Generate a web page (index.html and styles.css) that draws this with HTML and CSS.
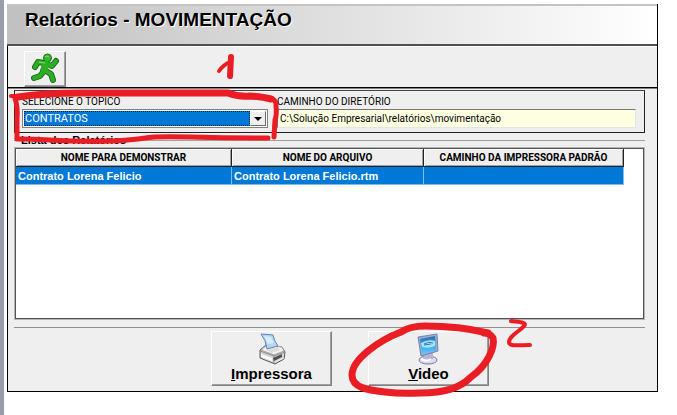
FILE: index.html
```html
<!DOCTYPE html>
<html lang="pt-BR">
<head>
<meta charset="utf-8">
<title>Relatórios - MOVIMENTAÇÃO</title>
<link rel="stylesheet" href="styles.css">
</head>
<body>
<main class="window">
  <header class="titlebar"><h1>Relatórios - MOVIMENTAÇÃO</h1></header>
  <div class="toolbar">
    <button class="exit" type="button" aria-label="Sair">
      <svg width="30" height="30" viewBox="0 0 30 30">
        <g fill="none" stroke="#176c17" stroke-width="6" stroke-linejoin="round" stroke-linecap="round">
          <path d="M17 11L14 18M15 10L9 9L6 14M20 12L23 13L27 8M15 18L11 23L5 25M17 18L22 21L24 27"/>
        </g>
        <circle cx="18.500" cy="5" r="4" fill="#35b92c" stroke="#176c17"/>
        <g fill="none" stroke="#2eae25" stroke-width="4" stroke-linejoin="round" stroke-linecap="round">
          <path d="M15 10L9 9L6 14M20 12L23 13L27 8M15 18L11 23L5 25M17 18L22 21L24 27"/>
          <path d="M17 11L15 17" stroke-width="7"/>
        </g>
        <path d="M16 4Q18 2 20 4M10 9L16 10" fill="none" stroke="#8be07f"/>
      </svg>
    </button>
  </div>
  <div class="content">
    <section class="filters">
      <div class="field topic">
        <label for="topic">SELECIONE O TÓPICO</label>
        <div class="combo">
          <select id="topic"><option>CONTRATOS</option></select>
          <span class="arrow" aria-hidden="true"></span>
        </div>
      </div>
      <div class="field path">
        <label for="path">CAMINHO DO DIRETÓRIO</label>
        <input id="path" type="text" readonly value="C:\Solução Empresarial\relatórios\movimentação">
      </div>
    </section>
    <section class="reports">
      <h2><span>Lista dos Relatórios</span></h2>
      <div class="grid">
        <table>
          <thead>
            <tr><th class="name">NOME PARA DEMONSTRAR</th><th class="file">NOME DO ARQUIVO</th><th>CAMINHO DA IMPRESSORA PADRÃO</th></tr>
          </thead>
          <tbody>
            <tr><td>Contrato Lorena Felicio</td><td>Contrato Lorena Felicio.rtm</td><td></td></tr>
          </tbody>
        </table>
      </div>
    </section>
    <footer class="actions">
      <button type="button">
        <svg width="28" height="32" viewBox="0 0 28 32">
          <path d="M2 17L8 12L24 14L27 19L26 26L17 31L2 25Z" fill="#d6d6d6" stroke="#55585b" stroke-linejoin="round"/>
          <path d="M3 17L9 12L24 14L26 18L16 22Z" fill="#f1f1ef" stroke="#a2a2a2"/>
          <path d="M3 1L15 2Q16 8 20 13L9 16Q8 7 3 1Z" fill="#b4d5fa" stroke="#6382ac"/>
          <path d="M6 3L13 4L16 10L10 11Z" fill="#d9ebff"/>
          <path d="M2 18L16 23L27 19M16 23V30" fill="none" stroke="#8b8b8b"/>
          <path d="M9 17L20 14L22 17L13 20Z" fill="#dcdcda"/>
          <path d="M3 21L14 25V28L3 24Z" fill="#fafafa"/>
          <path d="M15 25L24 21V24L16 28Z" fill="#4c4f52"/>
          <path d="M17 29L26 25" stroke="#eeeeee"/>
        </svg>
        <span><u>I</u>mpressora</span>
      </button>
      <button type="button">
        <svg width="28" height="32" viewBox="0 0 28 32">
          <defs><linearGradient id="screen" x2="0" y2="1"><stop stop-color="#3268ae"/><stop offset=".55" stop-color="#3aa9ed"/><stop offset="1" stop-color="#66c8fb"/></linearGradient></defs>
          <ellipse cx="13" cy="27" rx="9" ry="4" fill="#dedeef" stroke="#76769c"/>
          <path d="M10 20L18 19L18 26Q14 29 8 26Z" fill="#b5b5da"/>
          <path d="M3 4L22 1L23 18L6 23Z" fill="#9aaed4" stroke="#7186ad" stroke-linejoin="round"/>
          <path d="M5 6L20 3L21 17L7 21Z" fill="url(#screen)"/>
          <path d="M6 10Q13 6 20 8V13Q13 16 7 14Z" fill="#a4e3f8"/>
          <path d="M9 11Q14 8 18 10M9 12L16 11" fill="none" stroke="#287da8"/>
          <path d="M6 26Q12 29 16 26" fill="none" stroke="#ffffff" stroke-width="2"/>
        </svg>
        <span><u>V</u>ideo</span>
      </button>
    </footer>
  </div>
</main>
<svg class="marks" viewBox="0 0 677 415" preserveAspectRatio="none" aria-hidden="true">
  <path d="M219 71Q223 65 230 62" stroke-width="4"/>
  <path d="M231 57L230 76" stroke-width="6"/>
  <path d="M11 96L22 96" stroke-width="4"/>
  <path d="M18 97Q45 93 80 93L228 93Q238 97 250 96Q263 97 271 99" stroke-width="7"/>
  <path d="M268 98Q277 99 276 106Q277 115 275 120L274 137" stroke-width="5"/>
  <path d="M15 98Q18 108 17 118L17 138" stroke-width="5"/>
  <path d="M17 139Q35 139 50 140Q80 142 112 141Q132 140 145 138Q155 136 190 137Q230 138 268 138" stroke-width="5"/>
  <path d="M488 333Q460 326 425 326Q410 326 401 332C380 340 352 359 352 375C352 388 368 390 385 392Q400 394 420 393C445 393 460 388 471 377C488 365 495 347 493 338Q490 333 484 333" stroke-width="7"/>
  <path d="M511 321C518 322 528 322 524 326C520 331 509 336 509 342C509 347 520 345 530 345" stroke-width="4"/>
</svg>
</body>
</html>
```

FILE: styles.css
```css
* { box-sizing: border-box; }

body {
  position: relative;
  display: flex;
  min-height: 100vh;
  margin: 0;
  padding: 4px 19px 23px 3px;
  border-left: 4px solid #989ca8;
  background: #fff;
  color: #000;
  font-family: Roboto, "Liberation Sans", sans-serif;
  font-size: 10px;
}

.window {
  flex: 1;
  display: flex;
  flex-direction: column;
  min-width: 0;
  border: 1px solid #000;
  border-top: 0;
  background: #efefef;
}

.titlebar {
  height: 42px;
  margin: 0 0 0 -1px;
  padding: 1px 18px;
  border-top: 2px solid #c4c4c4;
  border-bottom: 2px solid #505050;
  background: linear-gradient(90deg, #c0c0c0, #fff);
}

h1 {
  margin: 0;
  font: bold 19px/26px "Liberation Sans", sans-serif;
  text-shadow: 1px 1px #fff;
}

button {
  border: 1px solid;
  border-color: #fff #808080 #808080 #fff;
  background: #efefef;
  color: #000;
  box-shadow: inset -1px -1px #a0a0a0;
}

.toolbar {
  height: 42px;
  padding: 4px 16px;
  border-top: 1px solid #fff;
  border-bottom: 1px solid #000;
}

.exit {
  display: flex;
  align-items: center;
  justify-content: center;
  width: 42px;
  height: 36px;
  padding: 0 2px 2px 0;
}

.content {
  flex: 1;
  display: flex;
  flex-direction: column;
  padding: 1px 12px 5px 6px;
  border-top: 1px solid #808080;
}

.filters {
  display: flex;
  gap: 9px;
  padding: 4px 8px 4px 7px;
  border: 1px solid #222;
  border-top: 1px solid #444;
}

.field {
  display: flex;
  flex-direction: column;
  gap: 1px;
}

.topic { flex: 246; }
.path { flex: 359; }

label { line-height: 13px; }

.combo {
  position: relative;
  display: flex;
  height: 19px;
  padding: 1px;
  border: 1px solid #808080;
  background: #fff;
}

select {
  flex: 1;
  min-width: 0;
  padding: 0;
  border: 1px dotted #00264d;
  border-radius: 0;
  background: #0078d7;
  color: #fff;
  font: 11px/12px Roboto, sans-serif;
  appearance: none;
}

.arrow {
  display: flex;
  align-items: center;
  justify-content: center;
  width: 16px;
  border: 1px solid;
  border-color: #fff #696969 #696969 #fff;
  background: #efefef;
  pointer-events: none;
}

.arrow::before {
  content: "";
  border: 4px solid transparent;
  border-top-color: #000;
  border-bottom: 0;
}

input {
  width: 100%;
  height: 19px;
  padding: 0 2px;
  border: 1px solid;
  border-color: #777 #e4e4e4 #e4e4e4 #777;
  background: #ffffe1;
  color: #000;
  font: 10px/14px Roboto, sans-serif;
}

.reports {
  flex: 1;
  display: flex;
  flex-direction: column;
}

h2 {
  display: flex;
  align-items: center;
  gap: 2px;
  height: 15px;
  margin: 0;
  font: bold 11px/15px "Liberation Sans", sans-serif;
}

h2::before,
h2::after {
  content: "";
  width: 5px;
  border-top: 1px solid #a0a0a0;
}

h2::after { flex: 1; }

.grid {
  flex: 1;
  margin: 0 1px;
  border: 1px solid #555;
  outline: 1px solid #b4b4b4;
  background: #fff;
}

table {
  width: calc(100% - 19px);
  border-collapse: separate;
  border-spacing: 0;
  table-layout: fixed;
}

.name { width: 216px; }
.file { width: 192px; }

th {
  height: 18px;
  padding: 0;
  border-right: 1px solid #222;
  border-bottom: 1px solid #222;
  background: #efefef;
  box-shadow: inset 1px 1px #fff, inset -1px -1px #a0a0a0;
  font-size: 10px;
}

td {
  height: 18px;
  padding: 0 2px;
  border-right: 1px solid #7fbbeb;
  border-bottom: 1px solid #7fbbeb;
  background: #0078d7;
  color: #fff;
  font: bold 11px/14px "Liberation Sans", sans-serif;
}

.actions {
  display: flex;
  justify-content: center;
  gap: 36px;
  margin-top: 8px;
  padding: 3px 0 0 41px;
  border-top: 1px solid #909090;
}

.actions button {
  display: flex;
  flex-direction: column;
  align-items: center;
  width: 121px;
  height: 55px;
  padding: 1px 0;
  font: bold 15px/17px "Liberation Sans", sans-serif;
}

.marks {
  position: absolute;
  top: 0;
  left: -4px;
  width: 100vw;
  height: 100%;
  fill: none;
  stroke: #ea1c24;
  stroke-linecap: round;
  stroke-linejoin: round;
  pointer-events: none;
}
```
